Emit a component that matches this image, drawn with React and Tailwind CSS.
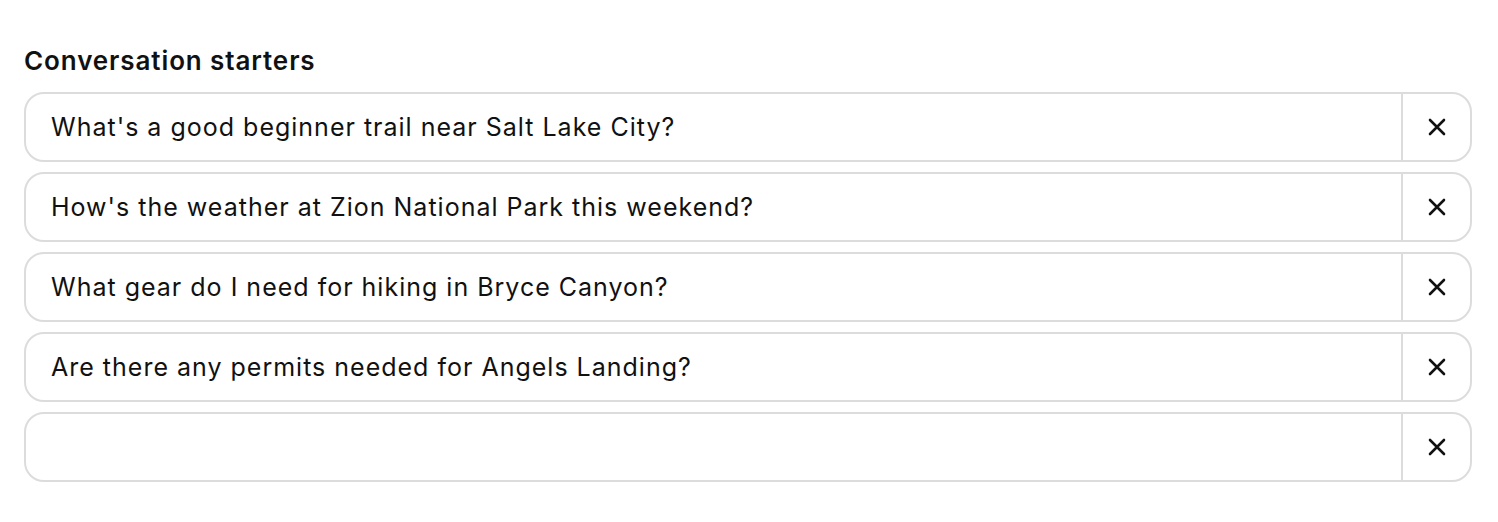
import React from "react";

const starters = [
  "What's a good beginner trail near Salt Lake City?",
  "How's the weather at Zion National Park this weekend?",
  "What gear do I need for hiking in Bryce Canyon?",
  "Are there any permits needed for Angels Landing?",
  "",
];

const XIcon = () => (
  <svg width="20" height="20" viewBox="0 0 20 20" fill="none" stroke="#111" strokeWidth="2.6" strokeLinecap="round">
    <path d="M3 3 L17 17 M17 3 L3 17" />
  </svg>
);

export default function App() {
  return (
    <div className="min-h-[522px] bg-white px-6 pt-[44px]" style={{ fontFamily: "Inter, 'Noto Sans', sans-serif" }}>
      <h2 className="text-[26px] font-semibold tracking-[0.9px] text-[#111] leading-[34px] mb-[14px]">Conversation starters</h2>
      <div className="flex flex-col gap-[10px]">
        {starters.map((s, i) => (
          <div key={i} className="flex h-[70px] w-[1448px] items-stretch rounded-[20px] border-2 border-[#dcdcdc] overflow-hidden">
            <div className="flex flex-1 items-center pl-[25px] pt-[2px] text-[25px] tracking-[1px] text-[#111]">{s}</div>
            <div className="flex w-[69px] items-center justify-center border-l-2 border-[#dcdcdc]">
              <XIcon />
            </div>
          </div>
        ))}
      </div>
    </div>
  );
}
